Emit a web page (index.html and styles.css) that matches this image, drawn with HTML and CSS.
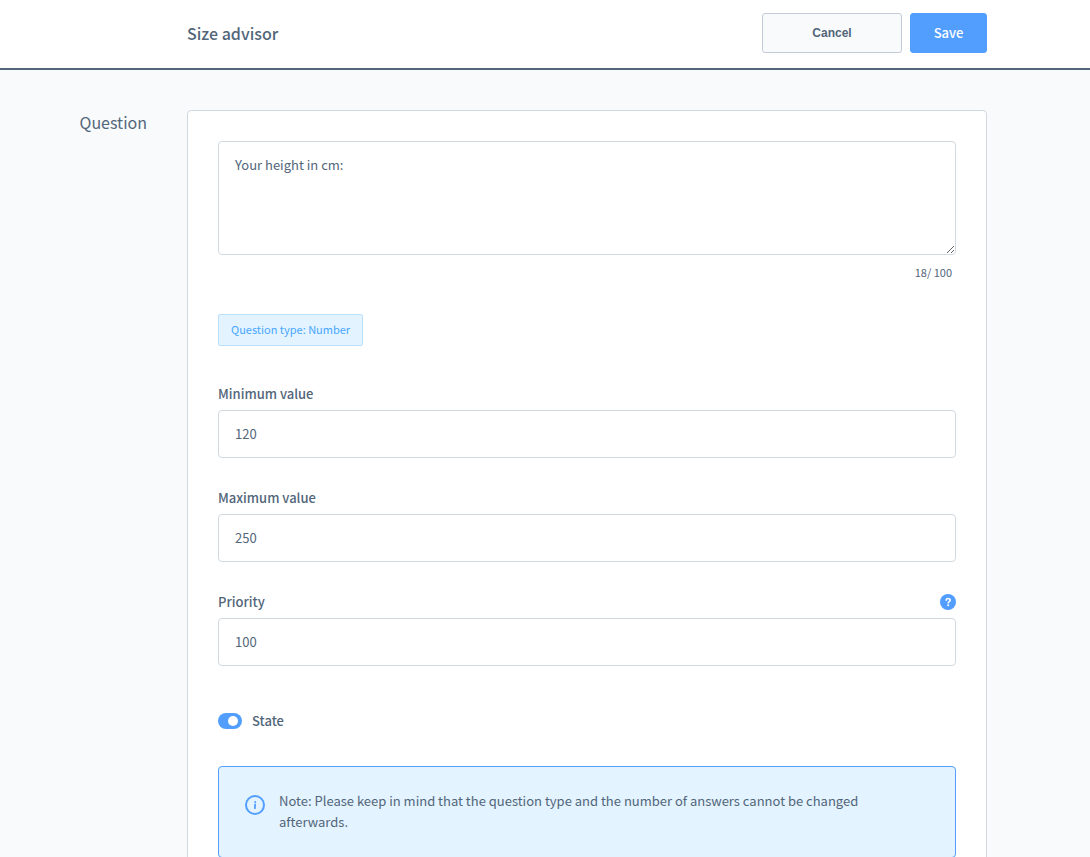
FILE: index.html
```
<!DOCTYPE html>
<html lang="en">
<head>
<meta charset="utf-8">
<meta name="viewport" content="width=device-width, initial-scale=1">
<title>Size advisor</title>
<link rel="stylesheet" href="styles.css">
</head>
<body>
<form class="page">
  <header class="header columns">
    <div class="header-content">
      <h1 class="header-title">Size advisor</h1>
      <div class="actions">
        <button class="button button-cancel" type="button">Cancel</button>
        <button class="button button-save" type="submit">Save</button>
      </div>
    </div>
  </header>
  <main class="main columns">
    <h2 class="section-title" id="question-title">Question</h2>
    <section class="card" aria-labelledby="question-title">
      <textarea class="control textarea" aria-labelledby="question-title" maxlength="100">Your height in cm:</textarea>
      <p class="counter">18/ 100</p>
      <p class="badge">Question type: Number</p>
      <div class="fields">
        <div class="field">
          <div class="field-head"><label class="label" for="minimum">Minimum value</label></div>
          <input class="control input" id="minimum" type="text" inputmode="numeric" value="120">
        </div>
        <div class="field">
          <div class="field-head"><label class="label" for="maximum">Maximum value</label></div>
          <input class="control input" id="maximum" type="text" inputmode="numeric" value="250">
        </div>
        <div class="field">
          <div class="field-head">
            <label class="label" for="priority">Priority</label>
            <button class="help" type="button" aria-label="Help">
              <svg width="16" height="16" viewBox="0 0 16 16" aria-hidden="true"><circle cx="8" cy="8" r="8" fill="#529eff"/><path d="M6.200 6.200C6.200 5 7 4.500 8.100 4.500S10.200 5.100 10.200 6.200C10.200 7.600 8.200 7.500 8.200 9" fill="none" stroke="#fff" stroke-width="1.600" stroke-linecap="round"/><circle cx="8.200" cy="11.300" r="1" fill="#fff"/></svg>
            </button>
          </div>
          <input class="control input" id="priority" type="text" inputmode="numeric" value="100">
        </div>
      </div>
      <div class="switch-row">
        <input class="switch" id="state" type="checkbox" role="switch" checked>
        <label class="label" for="state">State</label>
      </div>
      <div class="notice">
        <svg class="notice-icon" width="20" height="20" viewBox="0 0 20 20" aria-hidden="true"><circle cx="10" cy="10" r="9" fill="none" stroke="#529eff" stroke-width="2"/><circle cx="10.200" cy="6.900" r="1" fill="#529eff"/><path d="M10.100 9.300 9.900 13.300" stroke="#529eff" stroke-width="1.800" stroke-linecap="round"/></svg>
        <p class="notice-text">Note: Please keep in mind that the question type and the number of answers cannot be changed afterwards.</p>
      </div>
    </section>
  </main>
</form>
</body>
</html>
```

FILE: styles.css
```
* {
  box-sizing: border-box;
}

body {
  margin: 0;
  background: #f9fafb;
  color: #52667a;
  font-family: "Noto Sans CJK SC", "Noto Sans", sans-serif;
  font-size: 13px;
  line-height: 20px;
}

h1,
h2,
p {
  margin: 0;
}

button,
input,
textarea {
  font: inherit;
  color: inherit;
}

.page {
  display: flex;
  flex-direction: column;
  height: 100vh;
}

.columns {
  display: grid;
  grid-template-columns: 107px minmax(0, 800px);
  column-gap: 40px;
  padding-left: 40px;
  padding-right: 40px;
}

.header {
  flex: none;
  padding-top: 13px;
  padding-bottom: 15px;
  border-bottom: 2px solid #52667a;
  background: #fff;
}

.header-content {
  grid-column: 2;
  display: flex;
  align-items: center;
  justify-content: space-between;
}

.header-title {
  font-size: 16px;
  font-weight: 500;
  line-height: 24px;
}

.actions {
  display: flex;
  gap: 8px;
}

.button {
  height: 40px;
  border: 1px solid #c2ccd6;
  border-radius: 3px;
  cursor: pointer;
}

.button-cancel {
  width: 140px;
  background: #f9fafb;
  font-family: "Liberation Sans", Arial, sans-serif;
  font-size: 12px;
  font-weight: 700;
}

.button-save {
  width: 77px;
  border-color: #529eff;
  background: #529eff;
  color: #fff;
  font-weight: 500;
}

.main {
  flex: 1;
  min-height: 0;
  align-items: start;
  padding-top: 40px;
  padding-bottom: 40px;
  overflow-y: auto;
  scrollbar-width: none;
}

.section-title {
  text-align: right;
  font-size: 16px;
  font-weight: 400;
  line-height: 24px;
}

.card {
  display: flex;
  flex-direction: column;
  padding: 30px;
  border: 1px solid #d1d9e0;
  border-radius: 4px;
  background: #fff;
}

.control {
  display: block;
  width: 100%;
  padding: 0 16px 2px;
  border: 1px solid #d1d9e0;
  border-radius: 4px;
  background: #fff;
}

.textarea {
  height: 114px;
  padding: 13px 16px;
  resize: vertical;
}

.input {
  height: 48px;
}

.counter {
  align-self: flex-end;
  padding: 9px 4px 0;
  font-size: 11px;
  line-height: 16px;
}

.badge {
  align-self: flex-start;
  margin-top: 34px;
  padding: 4px 12px 6px;
  border: 1px solid #bae0ff;
  border-radius: 2px;
  background: #e3f3ff;
  color: #47a7ff;
  font-size: 11px;
}

.fields {
  display: flex;
  flex-direction: column;
  gap: 30px;
  margin-top: 38px;
}

.field-head {
  display: flex;
  align-items: center;
  justify-content: space-between;
  margin-bottom: 6px;
}

.label {
  font-weight: 500;
}

.help {
  display: flex;
  padding: 0;
  border: 0;
  background: none;
  cursor: pointer;
}

.switch-row {
  display: flex;
  align-items: center;
  gap: 10px;
  margin-top: 45px;
}

.switch {
  appearance: none;
  display: flex;
  width: 24px;
  height: 16px;
  margin: 0;
  padding: 3px 4px;
  border-radius: 8px;
  background: #c2ccd6;
}

.switch::before {
  content: "";
  width: 10px;
  height: 10px;
  border-radius: 50%;
  background: #fff;
}

.switch:checked {
  justify-content: flex-end;
  background: #529eff;
}

.notice {
  display: flex;
  gap: 14px;
  margin-top: 35px;
  padding: 23px 64px 25px 26px;
  border: 1px solid #529eff;
  border-radius: 4px;
  background: #e3f3ff;
}

.notice-icon {
  flex: none;
  margin-top: 5px;
}

.notice-text {
  line-height: 21px;
}
```
